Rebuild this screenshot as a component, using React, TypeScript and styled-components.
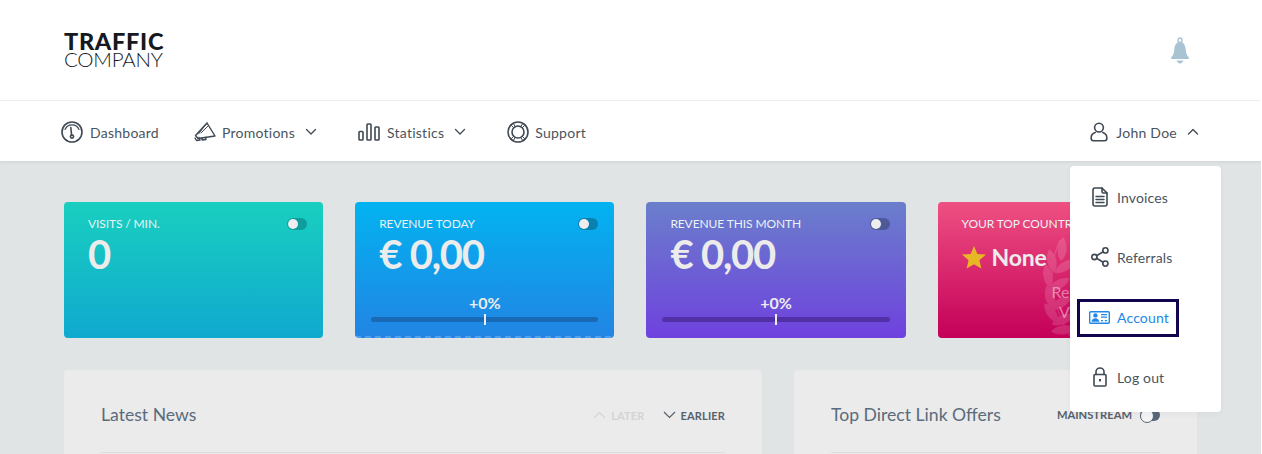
import React from 'react';
import styled, { createGlobalStyle } from 'styled-components';

const Global = createGlobalStyle`
  html, body { margin: 0; padding: 0; background: #fff; height: 454px; overflow: hidden; }
  body { font-family: Lato, "Liberation Sans", sans-serif; }
  * { box-sizing: border-box; }
`;

const Page = styled.div`
  position: relative;
  width: 1261px;
  height: 454px;
  overflow: hidden;
  background: #e0e4e5;
`;

const Header = styled.header`
  height: 101px;
  background: #fff;
  border-bottom: 1px solid #eef0f1;
  display: flex;
  align-items: flex-start;
  justify-content: space-between;
  padding: 32px 67px 0 64px;
`;

const Logo = styled.div`
  display: flex;
  flex-direction: column;
  color: #16191d;
  width: 100px;
`;
const LogoTop = styled.span`
  font-weight: 900;
  font-size: 23.5px;
  line-height: 19px;
  letter-spacing: 0.7px;
  white-space: nowrap;
`;
const LogoBottom = styled.span`
  font-weight: 300;
  font-size: 20.5px;
  line-height: 16px;
  letter-spacing: -0.25px;
  white-space: nowrap;
`;

const BellWrap = styled.div`
  margin-top: 5px;
  width: 24px;
  height: 30px;
`;

const Nav = styled.nav`
  height: 60px;
  background: #fff;
  display: flex;
  align-items: center;
  justify-content: space-between;
  padding: 2px 62px 0 61px;
  box-shadow: 0 1px 3px rgba(0, 0, 0, 0.08);
  position: relative;
`;
const NavGroup = styled.div`
  display: flex;
  align-items: center;
`;
const NavItem = styled.div<{ $gap: number }>`
  display: flex;
  align-items: center;
  font-size: 14px;
  letter-spacing: 0.25px;
  color: #4a545e;
  margin-right: ${p => p.$gap}px;
  svg { flex: none; }
`;
const NavLabel = styled.span<{ $ml: number }>`
  margin-left: ${p => p.$ml}px;
`;
const Chevron = styled.svg<{ $ml: number }>`
  margin-left: ${p => p.$ml}px;
`;

const Main = styled.main`
  padding: 41px 64px 0 64px;
`;
const Cards = styled.div`
  display: grid;
  grid-template-columns: repeat(4, 259.2px);
  gap: 32px;
`;
const Card = styled.div<{ $from: string; $to: string; $dash?: boolean }>`
  position: relative;
  height: 136px;
  border-radius: 4px;
  overflow: hidden;
  background: linear-gradient(180deg, ${p => p.$from}, ${p => p.$to});
  padding: 14px 16px 0 24px;
  color: #ececec;
  ${p => p.$dash ? `
    &::after {
      content: '';
      position: absolute;
      left: 0; right: 0; bottom: 0;
      height: 2px;
      background: repeating-linear-gradient(90deg, rgba(255,255,255,.22) 0 6px, transparent 6px 10px);
    }` : ''}
`;
const CardHead = styled.div`
  display: flex;
  align-items: center;
  justify-content: space-between;
  height: 16px;
`;
const CardTitle = styled.div`
  font-size: 12px;
  line-height: 16px;
  letter-spacing: -0.1px;
  white-space: nowrap;
  color: #eaf2f4;
`;
const Toggle = styled.div<{ $track: string }>`
  width: 20px;
  height: 12px;
  border-radius: 6px;
  background: ${p => p.$track};
  position: relative;
  flex: none;
  &::before {
    content: '';
    position: absolute;
    left: 1px;
    top: 1px;
    width: 10px;
    height: 10px;
    border-radius: 50%;
    background: #eee;
  }
`;
const Value = styled.div`
  font-size: 40px;
  font-weight: 700;
  line-height: 48px;
  margin-top: -2px;
  letter-spacing: -1.2px;
  color: #ececec;
  white-space: nowrap;
`;
const Delta = styled.div`
  position: absolute;
  left: 16px;
  right: 16px;
  bottom: 16px;
  display: flex;
  flex-direction: column;
  align-items: center;
`;
const DeltaText = styled.div`
  font-size: 16px;
  font-weight: 700;
  line-height: 16px;
  color: #ececec;
  margin-bottom: 6px;
`;
const Bar = styled.div<{ $c: string }>`
  position: relative;
  width: 100%;
  height: 5px;
  border-radius: 3px;
  background: ${p => p.$c};
  &::after {
    content: '';
    position: absolute;
    left: 50%;
    top: -3px;
    width: 2px;
    height: 11px;
    margin-left: -1px;
    background: #ececec;
  }
`;
const TopRow = styled.div`
  display: flex;
  align-items: center;
  margin-top: 10px;
  font-size: 23px;
  font-weight: 700;
  line-height: 30px;
  letter-spacing: -0.2px;
  color: #ececec;
  svg { margin-right: 6px; flex: none; }
`;
const Laurel = styled.svg`
  position: absolute;
  left: 102px;
  top: 34px;
  opacity: 0.14;
`;
const LaurelText = styled.div`
  position: absolute;
  left: 114px;
  top: 80px;
  font-size: 16px;
  line-height: 20px;
  color: rgba(255, 255, 255, 0.45);
  text-align: center;
  white-space: nowrap;
`;

const Panels = styled.div`
  display: grid;
  grid-template-columns: 698px 403px;
  gap: 32px;
  margin-top: 32px;
`;
const Panel = styled.section`
  height: 120px;
  background: #ebebeb;
  border-radius: 4px 4px 0 0;
  padding: 33px 37px 0 37px;
`;
const PanelHead = styled.div`
  display: flex;
  align-items: center;
  justify-content: space-between;
  height: 22px;
`;
const PanelRule = styled.div`
  height: 1px;
  background: #dcdcdc;
  margin-top: 27px;
`;
const PanelTitle = styled.h2`
  margin: 0;
  font-size: 17.6px;
  font-weight: 400;
  color: #5a6b7b;
  white-space: nowrap;
`;
const Pager = styled.div`
  display: flex;
  align-items: center;
  margin-top: 2px;
`;
const PagerBtn = styled.div<{ $off?: boolean }>`
  display: flex;
  align-items: center;
  font-size: 11px;
  font-weight: 700;
  letter-spacing: 0.15px;
  color: ${p => p.$off ? '#d2d4d6' : '#56616d'};
  margin-left: 18px;
  svg { margin-right: 5px; }
`;
const Mainstream = styled.div`
  display: flex;
  align-items: center;
  margin-top: 1px;
  font-size: 11.2px;
  font-weight: 700;
  color: #56616d;
`;
const DarkToggle = styled.div`
  width: 20px;
  height: 12px;
  border-radius: 6px;
  margin-left: 8px;
  background: #56677a;
  position: relative;
  &::before {
    content: '';
    position: absolute;
    left: 0;
    top: 0;
    width: 12px;
    height: 12px;
    border-radius: 50%;
    background: #f4f4f4;
    border: 1px solid #56677a;
  }
`;

const Menu = styled.div`
  position: absolute;
  left: 1070px;
  top: 166px;
  width: 151px;
  height: 246px;
  padding: 2px 0 0 7px;
  background: #fff;
  border-radius: 4px;
  box-shadow: 0 2px 6px rgba(0, 0, 0, 0.04);
  display: flex;
  flex-direction: column;
`;
const MenuRow = styled.div`
  height: 60px;
  display: flex;
  align-items: center;
`;
const MenuLink = styled.a<{ $focus?: boolean }>`
  display: flex;
  align-items: center;
  height: 32px;
  margin-left: 3px;
  padding: 0 7px 2px 9px;
  font-size: 14px;
  color: ${p => p.$focus ? '#2188e8' : '#4a545e'};
  outline: ${p => p.$focus ? '3px solid #12054f' : 'none'};
  letter-spacing: 0.15px;
`;
const MenuIcon = styled.span`
  width: 21px;
  height: 22px;
  margin-right: 7px;
  display: flex;
  align-items: center;
  justify-content: center;
`;

const stroke = { fill: 'none', stroke: '#3f4953', strokeWidth: 1.6, strokeLinecap: 'round' as const, strokeLinejoin: 'round' as const };

const ChevronDown = ({ ml }: { ml: number }) => (
  <Chevron $ml={ml} width="12" height="8" viewBox="0 0 12 8"><path d="M1.5 1.5 6 6l4.5-4.5" {...stroke} strokeWidth={1.3} /></Chevron>
);
const ChevronUp = ({ ml }: { ml: number }) => (
  <Chevron $ml={ml} width="12" height="8" viewBox="0 0 12 8"><path d="M1.5 6 6 1.5 10.5 6" {...stroke} strokeWidth={1.3} /></Chevron>
);

const Gauge = () => (
  <svg width="22" height="22" viewBox="0 0 22 22" {...stroke}>
    <circle cx="11" cy="11" r="10" />
    <path d="M4 8.5A7.6 7.6 0 0 1 18 8.5" strokeWidth={1.2} />
    <path d="M9.8 6.5 10.6 14" />
    <circle cx="11" cy="15.6" r="1.6" />
  </svg>
);
const Megaphone = () => (
  <svg width="22" height="21" viewBox="0 0 22 21" {...stroke} strokeWidth={1.4}>
    <path d="M13 1 21 14 4 16.5 1.5 13.5Z" />
    <path d="M4.5 12 13 1M7 11 14 4" strokeWidth={1} />
    <path d="M1 16 2.5 18.5 6 18 5 15.5" />
    <path d="M8 16v2l4-.5-.5-2" />
  </svg>
);
const Bars = () => (
  <svg width="22" height="18" viewBox="0 0 22 18" {...stroke}>
    <rect x="1" y="8.5" width="4" height="8.5" rx="0.8" />
    <rect x="9" y="1" width="4" height="16" rx="0.8" />
    <rect x="17" y="4" width="4" height="13" rx="0.8" />
  </svg>
);
const Lifebuoy = () => (
  <svg width="22" height="22" viewBox="0 0 22 22" {...stroke}>
    <circle cx="11" cy="11" r="10" />
    <circle cx="11" cy="11" r="6" />
    <path d="M4.2 4.2 6.8 6.8M17.8 4.2 15.2 6.8M4.2 17.8 6.8 15.2M17.8 17.8 15.2 15.2M6.4 2.6 8.2 5.6M15.6 2.6 13.8 5.6M6.4 19.4 8.2 16.4M15.6 19.4 13.8 16.4" strokeWidth={1} />
  </svg>
);
const User = () => (
  <svg width="18" height="20" viewBox="0 0 18 20" {...stroke}>
    <circle cx="9" cy="5.6" r="4.4" />
    <path d="M5.2 10.6C2.8 11.4 1.2 13.2 1.2 15.6v1c0 1.2 1 2.2 2.2 2.2h11.2c1.2 0 2.2-1 2.2-2.2v-1c0-2.4-1.6-4.2-4-5" />
  </svg>
);
const Bell = () => (
  <svg width="20" height="30" viewBox="0 0 20 27" preserveAspectRatio="none">
    <circle cx="10" cy="3" r="2" fill="none" stroke="#a9c3d3" strokeWidth="1.4" />
    <path d="M10 4.5c-3.6 0-5.2 2.6-5.6 6.2C4 14.6 3.2 16.6 1.2 18.2v1.6h17.6v-1.6c-2-1.6-2.8-3.6-3.2-7.5C15.2 7.1 13.6 4.5 10 4.5Z" fill="#a9c3d3" />
    <path d="M6.6 21.2h6.8c-.6 1.6-1.9 2.6-3.4 2.6s-2.8-1-3.4-2.6Z" fill="#a9c3d3" />
  </svg>
);
const Doc = () => (
  <svg width="16" height="20" viewBox="0 0 16 20" {...stroke}>
    <path d="M3 1h7l5 5v11c0 1.1-.9 2-2 2H3c-1.1 0-2-.9-2-2V3c0-1.1.9-2 2-2Z" />
    <path d="M10 1v3.5c0 .8.7 1.5 1.5 1.5H15" />
    <path d="M4 9.5h8M4 12.5h8M4 15.5h8" strokeWidth={1.5} />
  </svg>
);
const Share = () => (
  <svg width="18" height="20" viewBox="0 0 18 20" {...stroke}>
    <circle cx="3.4" cy="10" r="2.6" />
    <circle cx="14.4" cy="3.4" r="2.6" />
    <circle cx="14.4" cy="16.6" r="2.6" />
    <path d="M5.6 8.7 12.2 4.7M5.6 11.3 12.2 15.3" />
  </svg>
);
const IdCard = () => (
  <svg width="21" height="13" viewBox="0 0 21 13">
    <rect x="0.7" y="0.7" width="19.6" height="11.6" rx="1" fill="none" stroke="#2188e8" strokeWidth="1.4" />
    <circle cx="6.4" cy="4.4" r="2.2" fill="#2188e8" />
    <path d="M2.6 10.8c0-2.2 1.7-3.6 3.8-3.6s3.8 1.4 3.8 3.6Z" fill="#2188e8" />
    <path d="M12 3.6h6M12 6.2h6M12 9.6h2M15.8 9.6h2.2" stroke="#2188e8" strokeWidth="1.2" />
  </svg>
);
const Lock = () => (
  <svg width="14" height="20" viewBox="0 0 14 20" {...stroke}>
    <rect x="1" y="7.5" width="12" height="11.5" rx="1" />
    <path d="M3 7.5V4.8C3 2.6 4.8 1 7 1s4 1.6 4 3.8v2.7" />
    <rect x="6" y="12" width="2" height="2.4" fill="#3f4953" stroke="none" />
  </svg>
);
const Star = () => (
  <svg width="24" height="23" viewBox="0 0 24 23">
    <path d="M12 0l3.3 7.9 8.7.7-6.6 5.6 2 8.4L12 18.2 4.6 22.6l2-8.4L0 8.6l8.7-.7Z" fill="#e8b725" />
  </svg>
);
const LaurelShape = () => {
  const leaves = [
    [22, 14, 4], [12, 26, -12], [24, 31, 58], [8, 41, -10], [18, 49, 60], [10, 62, -14], [19, 68, 62], [12, 78, -35], [22, 84, 66], [22, 94, 82],
  ];
  return (
    <Laurel width="60" height="102" viewBox="0 0 60 102">
      <path d="M20 4C8 30 8 64 30 100" fill="none" stroke="#fff" strokeWidth="1.2" />
      {leaves.map(([x, y, r], i) => (
        <path key={i} d="M0 -13C6 -7 6 5 0 11C-6 5 -6 -7 0 -13Z" fill="#fff" transform={`translate(${x} ${y}) rotate(${r})`} />
      ))}
    </Laurel>
  );
};

const ArrowUp = () => (
  <svg width="13" height="8" viewBox="0 0 13 8"><path d="M1 7 6.5 1.5 12 7" fill="none" stroke="#d2d4d6" strokeWidth="1.2" /></svg>
);
const ArrowDown = () => (
  <svg width="13" height="8" viewBox="0 0 13 8"><path d="M1 1 6.5 6.5 12 1" fill="none" stroke="#56616d" strokeWidth="1.2" /></svg>
);

export default function App() {
  return (
    <Page>
      <Global />
      <Header>
        <Logo>
          <LogoTop>TRAFFIC</LogoTop>
          <LogoBottom>COMPANY</LogoBottom>
        </Logo>
        <BellWrap><Bell /></BellWrap>
      </Header>
      <Nav>
        <NavGroup>
          <NavItem $gap={35}><Gauge /><NavLabel $ml={7}>Dashboard</NavLabel></NavItem>
          <NavItem $gap={41}><Megaphone /><NavLabel $ml={6}>Promotions</NavLabel><ChevronDown ml={10} /></NavItem>
          <NavItem $gap={41}><Bars /><NavLabel $ml={7}>Statistics</NavLabel><ChevronDown ml={10} /></NavItem>
          <NavItem $gap={0}><Lifebuoy /><NavLabel $ml={6}>Support</NavLabel></NavItem>
        </NavGroup>
        <NavItem $gap={0}><User /><NavLabel $ml={8}>John Doe</NavLabel><ChevronUp ml={10} /></NavItem>
      </Nav>
      <Main>
        <Cards>
          <Card $from="#19cfbf" $to="#10a9cf">
            <CardHead><CardTitle>VISITS / MIN.</CardTitle><Toggle $track="#0f9c9c" /></CardHead>
            <Value>0</Value>
          </Card>
          <Card $from="#02b3f0" $to="#2284e4" $dash>
            <CardHead><CardTitle>REVENUE TODAY</CardTitle><Toggle $track="#0a80b0" /></CardHead>
            <Value>€ 0,00</Value>
            <Delta><DeltaText>+0%</DeltaText><Bar $c="#1a69b5" /></Delta>
          </Card>
          <Card $from="#6a7fcb" $to="#6f41de">
            <CardHead><CardTitle>REVENUE THIS MONTH</CardTitle><Toggle $track="#4c5a9a" /></CardHead>
            <Value>€ 0,00</Value>
            <Delta><DeltaText>+0%</DeltaText><Bar $c="#5130a8" /></Delta>
          </Card>
          <Card $from="#ee5082" $to="#c40059">
            <CardHead><CardTitle>YOUR TOP COUNTRY</CardTitle></CardHead>
            <TopRow><Star />None</TopRow>
            <LaurelShape />
            <LaurelText>Reward<br />Visits</LaurelText>
          </Card>
        </Cards>
        <Panels>
          <Panel>
            <PanelHead>
              <PanelTitle>Latest News</PanelTitle>
              <Pager>
                <PagerBtn $off><ArrowUp />LATER</PagerBtn>
                <PagerBtn><ArrowDown />EARLIER</PagerBtn>
              </Pager>
            </PanelHead>
            <PanelRule />
          </Panel>
          <Panel>
            <PanelHead>
              <PanelTitle>Top Direct Link Offers</PanelTitle>
              <Mainstream>MAINSTREAM<DarkToggle /></Mainstream>
            </PanelHead>
            <PanelRule />
          </Panel>
        </Panels>
      </Main>
      <Menu>
        <MenuRow><MenuLink><MenuIcon><Doc /></MenuIcon>Invoices</MenuLink></MenuRow>
        <MenuRow><MenuLink><MenuIcon><Share /></MenuIcon>Referrals</MenuLink></MenuRow>
        <MenuRow><MenuLink $focus><MenuIcon><IdCard /></MenuIcon>Account</MenuLink></MenuRow>
        <MenuRow><MenuLink><MenuIcon><Lock /></MenuIcon>Log out</MenuLink></MenuRow>
      </Menu>
    </Page>
  );
}
